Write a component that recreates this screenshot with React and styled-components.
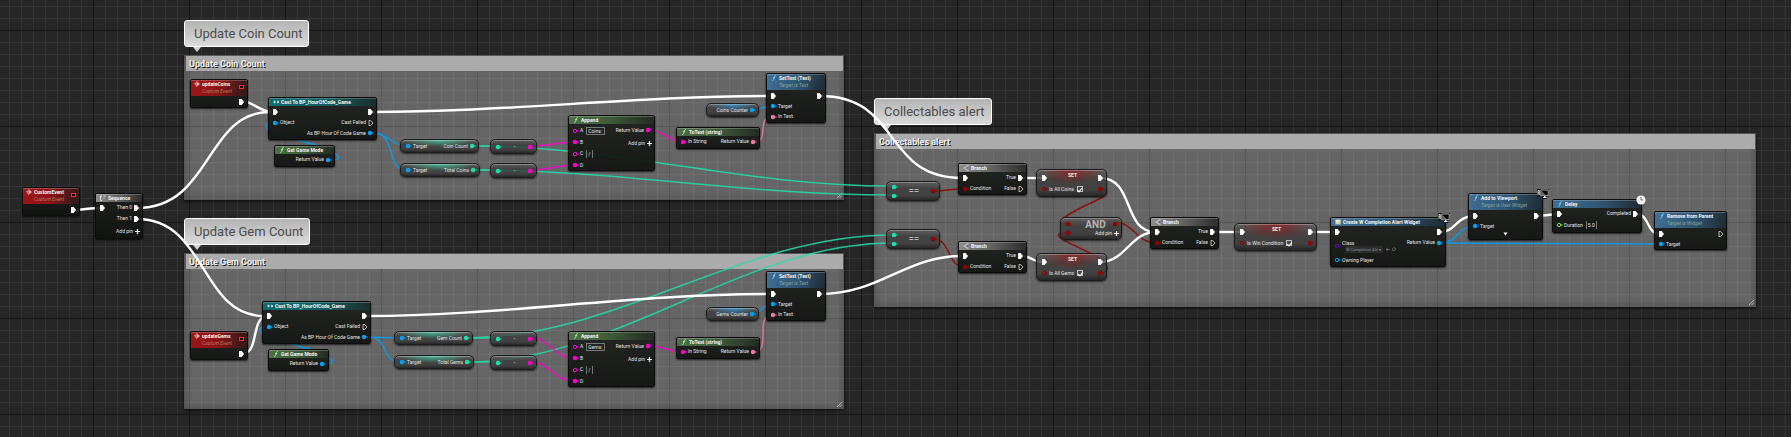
import React from "react";
import styled, { createGlobalStyle } from "styled-components";

const GlobalStyle = createGlobalStyle`
  * { box-sizing: border-box; }
  body { margin: 0; background: #262626; }
  button, input, select { font: inherit; color: inherit; margin: 0; padding: 0; }
`;

const C = {
  exec: "#ffffff",
  blue: "#00a2f2",
  teal: "#1fe0ab",
  pink: "#e879a5",
  magenta: "#ff00d0",
  red: "#950000",
  purple: "#5800c8",
  green: "#8fe02c",
};

/* ---------- canvas ---------- */

const Canvas = styled.main`
  position: relative;
  min-height: 100vh;
  overflow: hidden;
  font: 5px/7px Roboto, sans-serif;
  color: #e4e4e4;
  background-color: #262626;
  background-image: linear-gradient(90deg, #151515 1px, transparent 1px),
    linear-gradient(#151515 1px, transparent 1px),
    linear-gradient(90deg, #343434 1px, transparent 1px),
    linear-gradient(#343434 1px, transparent 1px);
  background-size: 96px 96px, 96px 96px, 12px 12px, 12px 12px;
  background-position: 93px 30px, 93px 30px, 93px 30px, 93px 30px;
`;

const Placed = styled.div`
  position: absolute;
  left: ${(p) => p.$x}px;
  top: ${(p) => p.$y}px;
`;

const CommentBox = styled(Placed).attrs({ as: "section" })`
  width: ${(p) => p.$w}px;
  height: ${(p) => p.$h}px;
  padding: 1px 1px 1px 2px;
  background: rgba(255, 255, 255, 0.29);
  box-shadow: inset 0 0 8px rgba(0, 0, 0, 0.3), 0 1px 3px rgba(0, 0, 0, 0.8);
`;

const CommentTitle = styled.h2`
  margin: 0;
  padding-left: 3px;
  height: 15px;
  background: #ababab;
  color: #f0f0f0;
  font-size: 9px;
  line-height: 16px;
  font-weight: 700;
  text-shadow: 1px 1px 0 #222;
`;

const Grip = styled.svg`
  position: absolute;
  right: 2px;
  bottom: 2px;
`;

const Bubble = styled(Placed)`
  height: 27px;
  padding: 0 6px 0 9px;
  border: 1px solid #fff;
  border-radius: 3px;
  background: linear-gradient(#b4b4b4, #dadada);
  color: #4c4c4c;
  font-size: 13px;
  line-height: 25px;
  white-space: nowrap;
  &::after {
    content: "";
    position: absolute;
    left: 8px;
    top: 26px;
    border: 4px solid transparent;
    border-top: 5px solid #d4d4d4;
    border-bottom: 0;
  }
`;

const Wires = styled.svg`
  position: absolute;
  left: 0;
  top: 0;
  overflow: visible;
  fill: none;
  pointer-events: none;
`;

/* ---------- nodes ---------- */

const NodeBox = styled(Placed).attrs({ as: "article" })`
  width: ${(p) => p.$w}px;
  min-height: ${(p) => p.$h}px;
  border: 1px solid #0c0c0c;
  border-radius: 2px;
  background: linear-gradient(rgba(28, 31, 28, 0.9), rgba(16, 18, 16, 0.93));
  box-shadow: 0 1px 2px rgba(0, 0, 0, 0.7);
  white-space: nowrap;
`;

const tints = {
  red: "linear-gradient(100deg, #a01418, #8a1418 50%, #3a1a1a 90%)",
  teal: "linear-gradient(90deg, #0d6b70, #115c60 55%, #1e2c2c)",
  green: "linear-gradient(90deg, #4f7048, #3c5a38 50%, #232b22)",
  blue: "linear-gradient(100deg, #3f7096, #2f5470 55%, #1e2a33)",
  gray: "linear-gradient(90deg, #8c8c8c, #666 45%, #2c2c2c)",
};

const Header = styled.header`
  display: flex;
  align-items: flex-start;
  gap: 2px;
  height: ${(p) => (p.$tall ? 16 : 8)}px;
  padding: 0 3px 0 ${(p) => (p.$tint === "red" ? 3 : 4)}px;
  border-radius: 1px 1px 0 0;
  background: ${(p) => tints[p.$tint]};
  box-shadow: inset 0 1px 0 rgba(255, 255, 255, 0.22);
`;

const Titles = styled.div`
  flex: 1;
`;

const Title = styled.h3`
  margin: 0;
  font-size: 5px;
  line-height: 8px;
  font-weight: 700;
  color: #f6f6f6;
`;

const Subtitle = styled.p`
  margin: 0;
  line-height: 7px;
  font-style: italic;
  color: ${(p) => (p.$tint === "red" ? "#b87a58" : "#8aa69c")};
`;

const HeadIcon = styled.svg`
  flex: none;
  margin-top: 1px;
`;

const Delegate = styled.span`
  width: 5px;
  height: 4px;
  margin-top: 5px;
  border: 1px solid #ff2a2a;
  background: #200;
`;

const Body = styled.div`
  display: flex;
  justify-content: space-between;
  padding: 0 2px 0 3px;
`;

const Column = styled.div`
  display: flex;
  flex-direction: column;
  align-items: ${(p) => (p.$end ? "flex-end" : "flex-start")};
  gap: ${(p) => p.$gap || 0}px;
`;

const Row = styled.div`
  display: flex;
  align-items: center;
  gap: 1px;
  height: ${(p) => p.$h || 11}px;
`;

const PlainButton = styled.button`
  display: flex;
  align-items: center;
  gap: 2px;
  border: 0;
  background: none;
  line-height: 7px;
`;

const TextField = styled.input`
  width: ${(p) => p.$w}px;
  height: 8px;
  margin-left: 2px;
  padding: 0 0 0 1px;
  border: 1px solid #777;
  border-width: ${(p) => (p.$open ? "0 1px" : "1px")};
  background: transparent;
  line-height: 6px;
`;

const ClassSelect = styled.select`
  width: 38px;
  height: 7px;
  padding: 0 0 0 1px;
  border: 0;
  appearance: none;
  background: #2c2e2c;
  color: #8a8a8a;
  font-size: 4px;
  line-height: 7px;
`;

const ClassLine = styled.div`
  display: flex;
  align-items: center;
  gap: 2px;
  padding-left: 3px;
  height: 6px;
`;

const Tick = styled.input`
  appearance: none;
  display: grid;
  place-items: center;
  width: 6px;
  height: 6px;
  margin-left: 2px;
  border: 1px solid #bdbdbd;
  background: #4a4a4a;
  &:checked::after {
    content: "";
    width: 2px;
    height: 4px;
    border: solid #fff;
    border-width: 0 1px 1px 0;
    transform: rotate(40deg);
  }
`;

const Expand = styled.button`
  display: block;
  width: 100%;
  height: 7px;
  border: 0;
  background: none;
  line-height: 7px;
`;

const Pill = styled(Placed).attrs({ as: "article" })`
  display: flex;
  align-items: center;
  justify-content: space-between;
  width: ${(p) => p.$w}px;
  height: ${(p) => p.$h || 14}px;
  padding: 0 2px 0 4px;
  border: 1px solid #1c1c1c;
  border-radius: 5px;
  white-space: nowrap;
  background: ${(p) =>
      p.$glow ? `radial-gradient(ellipse 45% 60% at 50% 0, ${p.$glow}, transparent),` : ""}
    linear-gradient(rgba(92, 92, 92, 0.8), rgba(58, 58, 58, 0.8) 35%, rgba(56, 56, 56, 0.8) 75%, rgba(28, 28, 28, 0.85));
  box-shadow: inset 0 1px 0 rgba(255, 255, 255, 0.28), 0 1px 2px rgba(0, 0, 0, 0.6);
`;

const SetBox = styled(Pill)`
  display: block;
`;

const SetTitle = styled.h3`
  margin: 0;
  height: 4px;
  padding-top: 1px;
  font-size: 5px;
  line-height: 8px;
  text-align: center;
  color: #eee;
`;

const Line = styled.div`
  display: flex;
  align-items: center;
  justify-content: space-between;
  height: ${(p) => p.$h}px;
`;

const Symbol = styled.span`
  color: #b4b4b4;
  font-size: ${(p) => p.$size}px;
  line-height: 10px;
  font-weight: ${(p) => p.$weight || 400};
`;

const AndMiddle = styled.div`
  display: flex;
  flex-direction: column;
  align-items: center;
  flex: 1;
  margin-right: -7px;
`;

const AndPin = styled.div`
  align-self: flex-end;
`;

const Badge = styled(Placed).attrs({ as: "svg" })``;

/* ---------- pins and icons ---------- */

const Exec = ({ open }) => (
  <svg width="7" height="6" viewBox="0 0 7 6">
    <path
      d={open ? "M2 .5h1.6L6 3 3.6 5.5H2z" : "M1 0h2.700L6 3 3.700 6H1z"}
      fill={open ? "none" : "#fff"}
      stroke={open ? "#ddd" : "none"}
      strokeWidth=".8"
    />
  </svg>
);

const Dot = ({ c, open }) => (
  <svg width="7" height="6" viewBox="0 0 7 6">
    <circle cx="3" cy="3" r={open ? 1.7 : 2.2} fill={open ? "none" : c} stroke={c} strokeWidth={open ? 1 : 0} />
    <path d="M5.4 1.9 7 3 5.4 4.1z" fill={c} />
  </svg>
);

const Plus = () => (
  <svg width="5" height="5" viewBox="0 0 5 5">
    <path d="M2.5 0v5M0 2.5h5" stroke="#fff" strokeWidth="1.2" />
  </svg>
);

const icons = {
  event: (
    <g fill="none" stroke="#eee" strokeWidth=".8">
      <path d="M3 .6 5.4 3 3 5.4.6 3z" />
      <path d="M2 3h2.6M3.4 2v2" />
    </g>
  ),
  func: <path d="M5 .6C3.6.2 3.3 1.2 3 3S2.4 5.8 1 5.4M2 2.6h2.2" fill="none" stroke="currentColor" strokeWidth=".9" />,
  cast: <path d="M0 3h2M4 3h2M1.2 1.8 2.6 3 1.2 4.2zM4.6 1.8 6 3 4.6 4.2z" fill="#eee" stroke="#eee" strokeWidth=".5" />,
  branch: <path d="M5.5.8H4L1.5 3 4 5.2h1.5M.5 3h1" fill="none" stroke="#eee" strokeWidth=".8" />,
  sequence: <path d="M.5 1v4.5M.5 1h1.5M.5 5.5h1.5M3.5 1h2M3.5 3.2h1" fill="none" stroke="#eee" strokeWidth=".9" />,
  widget: (
    <g>
      <path d="M.3.5h5.4v5H.3z" fill="#d9d3bb" stroke="#8d8870" strokeWidth=".5" />
      <path d="M.5 2h5" stroke="#fff" strokeWidth=".8" />
    </g>
  ),
};

const iconColor = { green: "#a8f098", blue: "#7cc8ff" };

const Node = ({ x, y, w, h, tint, icon, title, sub, event, children }) => (
  <NodeBox $x={x} $y={y} $w={w} $h={h}>
    <Header $tint={tint} $tall={!!sub}>
      <HeadIcon width="6" height="6" viewBox="0 0 6 6" color={iconColor[tint]}>
        {icons[icon]}
      </HeadIcon>
      <Titles>
        <Title>{title}</Title>
        {sub && <Subtitle $tint={tint}>{sub}</Subtitle>}
      </Titles>
      {event && <Delegate />}
    </Header>
    {children}
  </NodeBox>
);

const In = ({ exec, c, open, label, h, children }) => (
  <Row $h={h}>
    {exec ? <Exec open={open} /> : <Dot c={c} open={open} />}
    {label && <span>{label}</span>}
    {children}
  </Row>
);

const Out = ({ exec, c, open, label, h }) => (
  <Row $h={h}>
    {label && <span>{label}</span>}
    {exec ? <Exec open={open} /> : <Dot c={c} open={open} />}
  </Row>
);

const AddPin = () => (
  <PlainButton type="button">
    Add pin <Plus />
  </PlainButton>
);

/* ---------- node kinds ---------- */

const EventNode = ({ x, y, title }) => (
  <Node x={x} y={y} w={58} h={29} tint="red" icon="event" title={title} sub="Custom Event" event>
    <Body>
      <Column />
      <Column $end>
        <Out exec />
      </Column>
    </Body>
  </Node>
);

const CastNode = ({ x, y }) => (
  <Node x={x} y={y} w={109} h={43} tint="teal" icon="cast" title="Cast To BP_HourOfCode_Game">
    <Body>
      <Column>
        <In exec />
        <In c={C.blue} label="Object" />
      </Column>
      <Column $end>
        <Out exec />
        <Out exec open label="Cast Failed" />
        <Out c={C.blue} label="As BP Hour Of Code Game" h={10} />
      </Column>
    </Body>
  </Node>
);

const GameMode = ({ x, y }) => (
  <Node x={x} y={y} w={61} h={22} tint="green" icon="func" title="Get Game Mode">
    <Body>
      <Column />
      <Column $end>
        <Out c={C.blue} label="Return Value" />
      </Column>
    </Body>
  </Node>
);

const Getter = ({ x, y, w, label }) => (
  <Pill $x={x} $y={y} $w={w} $glow="rgba(60, 210, 165, 0.75)">
    <In c={C.blue} label="Target" />
    <Out c={C.teal} label={label} />
  </Pill>
);

const Convert = ({ x, y }) => (
  <Pill $x={x} $y={y} $w={47} $h={15}>
    <Dot c={C.teal} />
    <Symbol $size={6}>•</Symbol>
    <Dot c={C.magenta} />
  </Pill>
);

const Append = ({ x, y, text }) => (
  <Node x={x} y={y} w={87} h={56} tint="green" icon="func" title="Append">
    <Body>
      <Column>
        <In c={C.magenta} open label="A" h={13}>
          <TextField $w={19} defaultValue={text} aria-label="A" />
        </In>
        <In c={C.magenta} label="B" h={10} />
        <In c={C.magenta} open label="C" h={13}>
          <TextField $w={7} $open defaultValue="/" aria-label="C" />
        </In>
        <In c={C.magenta} label="D" h={10} />
      </Column>
      <Column $end $gap={4}>
        <Out c={C.magenta} label="Return Value" h={12} />
        <AddPin />
      </Column>
    </Body>
  </Node>
);

const ToText = ({ x, y }) => (
  <Node x={x} y={y} w={84} h={22} tint="green" icon="func" title="ToText (string)">
    <Body>
      <Column>
        <In c={C.magenta} label="In String" />
      </Column>
      <Column $end>
        <Out c={C.pink} label="Return Value" />
      </Column>
    </Body>
  </Node>
);

const Counter = ({ x, y, label }) => (
  <Pill $x={x} $y={y} $w={53} $glow="rgba(50, 150, 215, 0.8)">
    <span />
    <Out c={C.blue} label={label} />
  </Pill>
);

const SetText = ({ x, y }) => (
  <Node x={x} y={y} w={60} h={50} tint="blue" icon="func" title="SetText (Text)" sub="Target is Text">
    <Body>
      <Column>
        <In exec />
        <In c={C.blue} label="Target" h={10} />
        <In c={C.pink} label="In Text" />
      </Column>
      <Column $end>
        <Out exec />
      </Column>
    </Body>
  </Node>
);

const Equal = ({ x, y }) => (
  <Pill $x={x} $y={y} $w={54} $h={20}>
    <Column>
      <In c={C.teal} h={9} />
      <In c={C.teal} h={9} />
    </Column>
    <Symbol $size={9} $weight={700}>==</Symbol>
    <Dot c={C.red} />
  </Pill>
);

const Branch = ({ x, y }) => (
  <Node x={x} y={y} w={69} h={32} tint="gray" icon="branch" title="Branch">
    <Body>
      <Column>
        <In exec />
        <In c={C.red} label="Condition" />
      </Column>
      <Column $end>
        <Out exec label="True" />
        <Out exec open label="False" />
      </Column>
    </Body>
  </Node>
);

const SetVar = ({ x, y, w, label }) => (
  <SetBox $x={x} $y={y} $w={w} $h={28} $glow="rgba(150, 20, 20, 0.7)">
    <SetTitle>SET</SetTitle>
    <Line $h={8}>
      <Exec />
      <Exec />
    </Line>
    <Line $h={14}>
      <Row as="label">
        <Dot c={C.red} open />
        <span>{label}</span>
        <Tick type="checkbox" defaultChecked />
      </Row>
      <Dot c={C.red} />
    </Line>
  </SetBox>
);

/* ---------- wires ---------- */

const wires = [
  [C.teal, 1.5, [
    "M472 146C620 146 740 186 892 186",
    "M474 170C620 170 740 195 892 195",
    "M466 338C616 338 742 235 892 235",
    "M468 362C618 362 742 243 892 243",
    "M472 146H494", "M474 170H494", "M466 338H494", "M468 362H494",
  ]],
  [C.blue, 1.5, [
    "M330 160C350 160 330 149 312 144S262 131 266 125S272 123 276 123",
    "M324 364C344 364 324 353 306 348S256 335 260 329S266 327 270 327",
    "M374 133C388 133 392 146 406 146",
    "M374 133C396 133 386 170 406 170",
    "M368 337C380 337 386 338 400 338",
    "M368 337C390 337 380 362 400 362",
    "M752 110C760 110 764 106 772 106",
    "M752 314C762 314 762 304 772 304",
    "M1440 243C1458 243 1458 226 1474 226",
    "M1440 243C1500 243 1600 244 1660 244",
  ]],
  [C.magenta, 1.5, [
    "M530 146C545 146 560 142 574 142",
    "M530 170C545 170 560 165 574 165",
    "M530 338C552 338 552 358 574 358",
    "M530 362C552 362 552 381 574 381",
    "M650 130C662 130 670 142 682 142",
    "M650 346C662 346 670 352 682 352",
  ]],
  [C.pink, 1.5, [
    "M754 142C770 142 756 117 772 117",
    "M754 352C772 352 754 315 772 315",
  ]],
  [C.red, 1.5, [
    "M934 191C944 191 952 189 964 189",
    "M934 239C950 239 948 267 964 267",
    "M1098 189C1112 189 1108 195 1095 201S1057 219 1061 223L1066 224",
    "M1098 273C1114 273 1108 262 1090 253S1056 238 1059 234L1066 233",
    "M1114 222C1134 222 1136 243 1156 243",
  ]],
  [C.exec, 2.4, [
    "M72 210C82 210 90 208 102 208",
    "M137 208C212 208 205 112 270 112",
    "M137 219C207 219 200 316 264 316",
    "M242 101C252 101 260 112 272 112",
    "M242 354C260 354 250 316 268 316",
    "M372 112C510 112 630 96 772 96",
    "M366 316C500 316 630 294 772 294",
    "M820 96C902 96 882 178 962 178",
    "M820 294C880 294 905 256 962 256",
    "M1022 178H1042",
    "M1022 256C1030 256 1034 262 1042 262",
    "M1100 178C1135 178 1122 232 1156 232",
    "M1100 262C1126 262 1130 232 1156 232",
    "M1214 232H1240",
    "M1310 232H1336",
    "M1440 232C1456 232 1456 216 1474 216",
    "M1538 216L1558 214",
    "M1636 214C1650 214 1646 234 1660 234",
  ]],
];

const Comment = ({ x, y, w, h, title }) => (
  <CommentBox $x={x} $y={y} $w={w} $h={h}>
    <CommentTitle>{title}</CommentTitle>
    <Grip width="5" height="5" viewBox="0 0 5 5">
      <path d="M0 5 5 0M2.5 5 5 2.5" stroke="#ccc" strokeWidth=".8" />
    </Grip>
  </CommentBox>
);

const Monitor = ({ x, y }) => (
  <Badge $x={x} $y={y} width="12" height="10" viewBox="0 0 12 10">
    <path d="M0 0h12v7.500H10V10H5V7.500H0z" fill="#161616" />
    <path d="M3.800 1h7.400v5.600H3.800z" fill="#000" stroke="#d8d8d8" strokeWidth=".8" />
    <path d="M4.200 1.400v5L9 6.300z" fill="#666" />
    <path d="M6 8.500h3.500M7.700 7v1.500" stroke="#fff" strokeWidth="1.200" />
    <path d="M1 6V1.500h1.300V6M1 3.800h1.300" fill="none" stroke="#eee" strokeWidth=".8" />
  </Badge>
);

export default function App() {
  return (
    <>
      <GlobalStyle />
      <Canvas>
        <Comment x={184} y={55} w={660} h={145} title="Update Coin Count" />
        <Comment x={184} y={253} w={660} h={156} title="Update Gem Count" />
        <Comment x={874} y={133} w={882} h={174} title="Collectables alert" />
        <Bubble $x={184} $y={20}>Update Coin Count</Bubble>
        <Bubble $x={184} $y={218}>Update Gem Count</Bubble>
        <Bubble $x={874} $y={98}>Collectables alert</Bubble>

        <Wires width="1" height="1">
          {wires.map(([color, width, paths]) => (
            <g key={color} stroke={color} strokeWidth={width} opacity={color === C.exec ? 1 : 0.85}>
              {paths.map((d) => (
                <path key={d} d={d} />
              ))}
            </g>
          ))}
        </Wires>

        <EventNode x={22} y={187} title="CustomEvent" />
        <Node x={95} y={193} w={48} h={44} tint="gray" icon="sequence" title="Sequence">
          <Body>
            <Column>
              <In exec />
            </Column>
            <Column $end>
              <Out exec label="Then 0" />
              <Out exec label="Then 1" />
              <Row $h={14}>
                <AddPin />
              </Row>
            </Column>
          </Body>
        </Node>

        <EventNode x={190} y={79} title="updateCoins" />
        <CastNode x={268} y={97} />
        <GameMode x={274} y={145} />
        <Getter x={400} y={139} w={79} label="Coin Count" />
        <Getter x={400} y={163} w={80} label="Total Coins" />
        <Convert x={490} y={139} />
        <Convert x={490} y={163} />
        <Append x={568} y={115} text="Coins:" />
        <ToText x={676} y={127} />
        <Counter x={706} y={103} label="Coins Counter" />
        <SetText x={766} y={73} />

        <EventNode x={190} y={331} title="updateGems" />
        <CastNode x={262} y={301} />
        <GameMode x={268} y={349} />
        <Getter x={394} y={331} w={79} label="Gem Count" />
        <Getter x={394} y={355} w={80} label="Total Gems" />
        <Convert x={490} y={331} />
        <Convert x={490} y={355} />
        <Append x={568} y={331} text="Gems:" />
        <ToText x={676} y={337} />
        <Counter x={706} y={307} label="Gems Counter" />
        <SetText x={766} y={271} />

        <Equal x={886} y={181} />
        <Equal x={886} y={229} />
        <Branch x={958} y={163} />
        <Branch x={958} y={241} />
        <SetVar x={1036} y={169} w={71} label="Is All Coins" />
        <SetVar x={1036} y={253} w={71} label="Is All Gems" />
        <Pill $x={1060} $y={217} $w={62} $h={23}>
          <Column>
            <In c={C.red} h={9} />
            <In c={C.red} h={9} />
          </Column>
          <AndMiddle>
            <Symbol $size={10} $weight={700}>AND</Symbol>
            <AndPin>
              <AddPin />
            </AndPin>
          </AndMiddle>
          <Column>
            <Out c={C.red} h={9} />
            <Row $h={9} />
          </Column>
        </Pill>
        <Branch x={1150} y={217} />
        <SetVar x={1234} y={223} w={83} label="Is Win Condition" />

        <Node x={1330} y={217} w={116} h={50} tint="blue" icon="widget" title="Create W Completion Alert Widget">
          <Body>
            <Column>
              <In exec />
              <Row $h={18}>
                <Dot c={C.purple} open />
                <div>
                  <label htmlFor="widget-class">Class</label>
                  <ClassLine>
                    <ClassSelect id="widget-class">
                      <option>W Completion Ale ▾</option>
                    </ClassSelect>
                    <svg width="11" height="5" viewBox="0 0 11 5">
                      <path d="M5 2.5H1M3 .8 1 2.5 3 4.2M7 4.5 8 3.4" fill="none" stroke="#6a6a6a" strokeWidth=".8" />
                      <circle cx="9" cy="2.2" r="1.5" fill="none" stroke="#6a6a6a" strokeWidth=".8" />
                    </svg>
                  </ClassLine>
                </div>
              </Row>
              <In c={C.blue} open label="Owning Player" h={10} />
            </Column>
            <Column $end>
              <Out exec />
              <Out c={C.blue} label="Return Value" />
            </Column>
          </Body>
        </Node>

        <Node x={1468} y={193} w={75} h={47} tint="blue" icon="func" title="Add to Viewport" sub="Target is User Widget">
          <Body>
            <Column>
              <In exec />
              <In c={C.blue} label="Target" h={10} />
            </Column>
            <Column $end>
              <Out exec />
            </Column>
          </Body>
          <Expand type="button" aria-label="Show advanced pins">
            <svg width="5" height="4" viewBox="0 0 5 4">
              <path d="M.5.5h4L2.5 3.8z" fill="#fff" />
            </svg>
          </Expand>
        </Node>

        <Node x={1552} y={199} w={90} h={34} tint="blue" icon="func" title="Delay">
          <Body>
            <Column>
              <In exec />
              <In c={C.green} open label="Duration" h={12}>
                <TextField $w={11} $open defaultValue="5.0" aria-label="Duration" />
              </In>
            </Column>
            <Column $end>
              <Out exec label="Completed" />
            </Column>
          </Body>
        </Node>

        <Node x={1654} y={211} w={73} h={39} tint="blue" icon="func" title="Remove from Parent" sub="Target is Widget">
          <Body>
            <Column>
              <In exec />
              <In c={C.blue} label="Target" h={10} />
            </Column>
            <Column $end>
              <Out exec open />
            </Column>
          </Body>
        </Node>

        <Monitor x={1438} y={213} />
        <Monitor x={1537} y={189} />
        <Badge $x={1636} $y={195} width="10" height="10" viewBox="0 0 10 10">
          <circle cx="5" cy="5" r="4.6" fill="#f4f4f4" />
          <path d="M5 2v3h2" fill="none" stroke="#555" strokeWidth=".8" />
        </Badge>
      </Canvas>
    </>
  );
}
